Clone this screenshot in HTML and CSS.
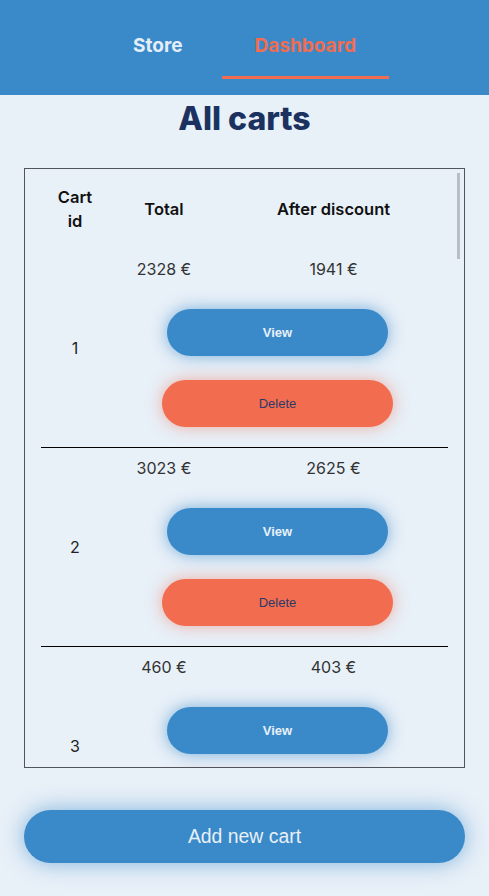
FILE: index.html
```html
<!DOCTYPE html>
<html lang="en">
<head>
<meta charset="utf-8">
<title>All carts</title>
<link rel="stylesheet" href="styles.css">
</head>
<body>
<header class="topbar">
  <nav class="nav">
    <a class="nav-link" href="#">Store</a>
    <a class="nav-link active" href="#">Dashboard</a>
  </nav>
</header>
<main class="main">
  <h1 class="title">All carts</h1>
  <div class="table-wrap">
    <div class="table-box">
      <table class="carts">
        <colgroup>
          <col class="c-id"><col class="c-total"><col class="c-after">
        </colgroup>
        <thead>
          <tr><th>Cart id</th><th>Total</th><th>After discount</th></tr>
        </thead>
        <tbody class="cart"><tr><td class="id" rowspan="2">1</td><td class="num">2328 €</td><td class="num">1941 €</td></tr><tr><td class="actions" colspan="2"><div class="btns"><button class="btn view">View</button><button class="btn del">Delete</button></div></td></tr></tbody>
        <tbody class="cart"><tr><td class="id" rowspan="2">2</td><td class="num">3023 €</td><td class="num">2625 €</td></tr><tr><td class="actions" colspan="2"><div class="btns"><button class="btn view">View</button><button class="btn del">Delete</button></div></td></tr></tbody>
        <tbody class="cart"><tr><td class="id" rowspan="2">3</td><td class="num">460 €</td><td class="num">403 €</td></tr><tr><td class="actions" colspan="2"><div class="btns"><button class="btn view">View</button><button class="btn del">Delete</button></div></td></tr></tbody>
        <tbody class="cart"><tr><td class="id" rowspan="2">4</td><td class="num">1750 €</td><td class="num">1488 €</td></tr><tr><td class="actions" colspan="2"><div class="btns"><button class="btn view">View</button><button class="btn del">Delete</button></div></td></tr></tbody>
        <tbody class="cart"><tr><td class="id" rowspan="2">5</td><td class="num">982 €</td><td class="num">845 €</td></tr><tr><td class="actions" colspan="2"><div class="btns"><button class="btn view">View</button><button class="btn del">Delete</button></div></td></tr></tbody>
        <tbody class="cart"><tr><td class="id" rowspan="2">6</td><td class="num">2210 €</td><td class="num">1901 €</td></tr><tr><td class="actions" colspan="2"><div class="btns"><button class="btn view">View</button><button class="btn del">Delete</button></div></td></tr></tbody>
        <tbody class="cart"><tr><td class="id" rowspan="2">7</td><td class="num">1334 €</td><td class="num">1127 €</td></tr><tr><td class="actions" colspan="2"><div class="btns"><button class="btn view">View</button><button class="btn del">Delete</button></div></td></tr></tbody>
        <tbody class="cart"><tr><td class="id" rowspan="2">8</td><td class="num">675 €</td><td class="num">590 €</td></tr><tr><td class="actions" colspan="2"><div class="btns"><button class="btn view">View</button><button class="btn del">Delete</button></div></td></tr></tbody>
        <tbody class="cart"><tr><td class="id" rowspan="2">9</td><td class="num">2894 €</td><td class="num">2463 €</td></tr><tr><td class="actions" colspan="2"><div class="btns"><button class="btn view">View</button><button class="btn del">Delete</button></div></td></tr></tbody>
        <tbody class="cart"><tr><td class="id" rowspan="2">10</td><td class="num">1502 €</td><td class="num">1290 €</td></tr><tr><td class="actions" colspan="2"><div class="btns"><button class="btn view">View</button><button class="btn del">Delete</button></div></td></tr></tbody>
        <tbody class="cart"><tr><td class="id" rowspan="2">11</td><td class="num">3120 €</td><td class="num">2711 €</td></tr><tr><td class="actions" colspan="2"><div class="btns"><button class="btn view">View</button><button class="btn del">Delete</button></div></td></tr></tbody>
        <tbody class="cart"><tr><td class="id" rowspan="2">12</td><td class="num">845 €</td><td class="num">732 €</td></tr><tr><td class="actions" colspan="2"><div class="btns"><button class="btn view">View</button><button class="btn del">Delete</button></div></td></tr></tbody>
        <tbody class="cart"><tr><td class="id" rowspan="2">13</td><td class="num">1967 €</td><td class="num">1680 €</td></tr><tr><td class="actions" colspan="2"><div class="btns"><button class="btn view">View</button><button class="btn del">Delete</button></div></td></tr></tbody>
        <tbody class="cart"><tr><td class="id" rowspan="2">14</td><td class="num">2405 €</td><td class="num">2059 €</td></tr><tr><td class="actions" colspan="2"><div class="btns"><button class="btn view">View</button><button class="btn del">Delete</button></div></td></tr></tbody>
        <tbody class="cart"><tr><td class="id" rowspan="2">15</td><td class="num">530 €</td><td class="num">466 €</td></tr><tr><td class="actions" colspan="2"><div class="btns"><button class="btn view">View</button><button class="btn del">Delete</button></div></td></tr></tbody>
        <tbody class="cart"><tr><td class="id" rowspan="2">16</td><td class="num">1288 €</td><td class="num">1102 €</td></tr><tr><td class="actions" colspan="2"><div class="btns"><button class="btn view">View</button><button class="btn del">Delete</button></div></td></tr></tbody>
        <tbody class="cart"><tr><td class="id" rowspan="2">17</td><td class="num">2750 €</td><td class="num">2338 €</td></tr><tr><td class="actions" colspan="2"><div class="btns"><button class="btn view">View</button><button class="btn del">Delete</button></div></td></tr></tbody>
        <tbody class="cart"><tr><td class="id" rowspan="2">18</td><td class="num">1045 €</td><td class="num">912 €</td></tr><tr><td class="actions" colspan="2"><div class="btns"><button class="btn view">View</button><button class="btn del">Delete</button></div></td></tr></tbody>
        <tbody class="cart"><tr><td class="id" rowspan="2">19</td><td class="num">1873 €</td><td class="num">1599 €</td></tr><tr><td class="actions" colspan="2"><div class="btns"><button class="btn view">View</button><button class="btn del">Delete</button></div></td></tr></tbody>
        <tbody class="cart"><tr><td class="id" rowspan="2">20</td><td class="num">3312 €</td><td class="num">2874 €</td></tr><tr><td class="actions" colspan="2"><div class="btns"><button class="btn view">View</button><button class="btn del">Delete</button></div></td></tr></tbody>
      </table>
    </div>
    <div class="scroll-thumb"></div>
  </div>
  <button class="add-btn">Add new cart</button>
</main>
</body>
</html>
```

FILE: styles.css
```css
* { box-sizing: border-box; }

html, body {
  margin: 0;
  padding: 0;
  background: #e8f0f8;
  font-family: Inter, "Noto Sans", sans-serif;
}

.topbar {
  background: #3a8ac9;
  height: 95px;
  padding-top: 35px;
}

.nav {
  display: flex;
  justify-content: center;
  gap: 6px;
}

.nav-link {
  display: block;
  padding: 0 33px 19px;
  font-size: 19px;
  line-height: 22px;
  font-weight: 700;
  color: #e4eef8;
  text-decoration: none;
  border-bottom: 3px solid transparent;
}

.nav-link.active {
  color: #f26c4f;
  border-bottom-color: #f26c4f;
}

.main {
  padding: 0 24px 33px;
}

.title {
  margin: 4px 0 29px;
  text-align: center;
  font-size: 32px;
  line-height: 40px;
  font-weight: 800;
  color: #1b3260;
}

.table-wrap {
  position: relative;
}

.table-box {
  height: 600px;
  border: 1px solid #50555c;
  overflow-y: auto;
  padding: 0 16px;
  scrollbar-width: none;
}

.scroll-thumb {
  position: absolute;
  top: 5px;
  right: 5px;
  width: 3px;
  height: 86px;
  background: #babdc3;
}

.carts {
  width: 407px;
  border-collapse: collapse;
  table-layout: fixed;
  color: #222;
}

.c-id { width: 68px; }
.c-total { width: 110px; }
.c-after { width: 229px; }

.carts th {
  padding: 16px 12px;
  font-size: 16.5px;
  line-height: 24px;
  font-weight: 600;
  color: #111;
  text-align: center;
}

.cart + .cart {
  border-top: 1px solid #000;
}

.carts td {
  text-align: center;
  padding: 0;
}

.carts .num {
  padding: 10px 0;
  font-size: 16px;
  line-height: 20px;
  color: #333;
}

.carts .id {
  vertical-align: middle;
  font-size: 16px;
  line-height: 20px;
  color: #222;
}

.carts .actions {
  padding: 20px 0;
}

.btns {
  display: flex;
  flex-direction: column;
  align-items: center;
  gap: 24px;
  padding-right: 2px;
}

.btn {
  height: 47px;
  border: none;
  border-radius: 24px;
  font-family: "Liberation Sans", Arial, sans-serif;
  font-size: 13px;
  cursor: pointer;
}

.btn.view {
  width: 221px;
  background: #3a8ac9;
  color: #e8f0f8;
  font-weight: 700;
  box-shadow: 0 0 16px rgba(58, 138, 201, 0.65);
}

.btn.del {
  width: 231px;
  background: #f26c4f;
  color: #2b3a68;
  box-shadow: 0 0 16px rgba(242, 108, 79, 0.5);
}

.add-btn {
  display: block;
  width: 100%;
  height: 53px;
  margin-top: 42px;
  border: none;
  border-radius: 27px;
  background: #3a8ac9;
  color: #e8f0f8;
  font-family: "Liberation Sans", Arial, sans-serif;
  font-size: 19.4px;
  box-shadow: 0 0 22px rgba(58, 138, 201, 0.6);
  cursor: pointer;
}
```
